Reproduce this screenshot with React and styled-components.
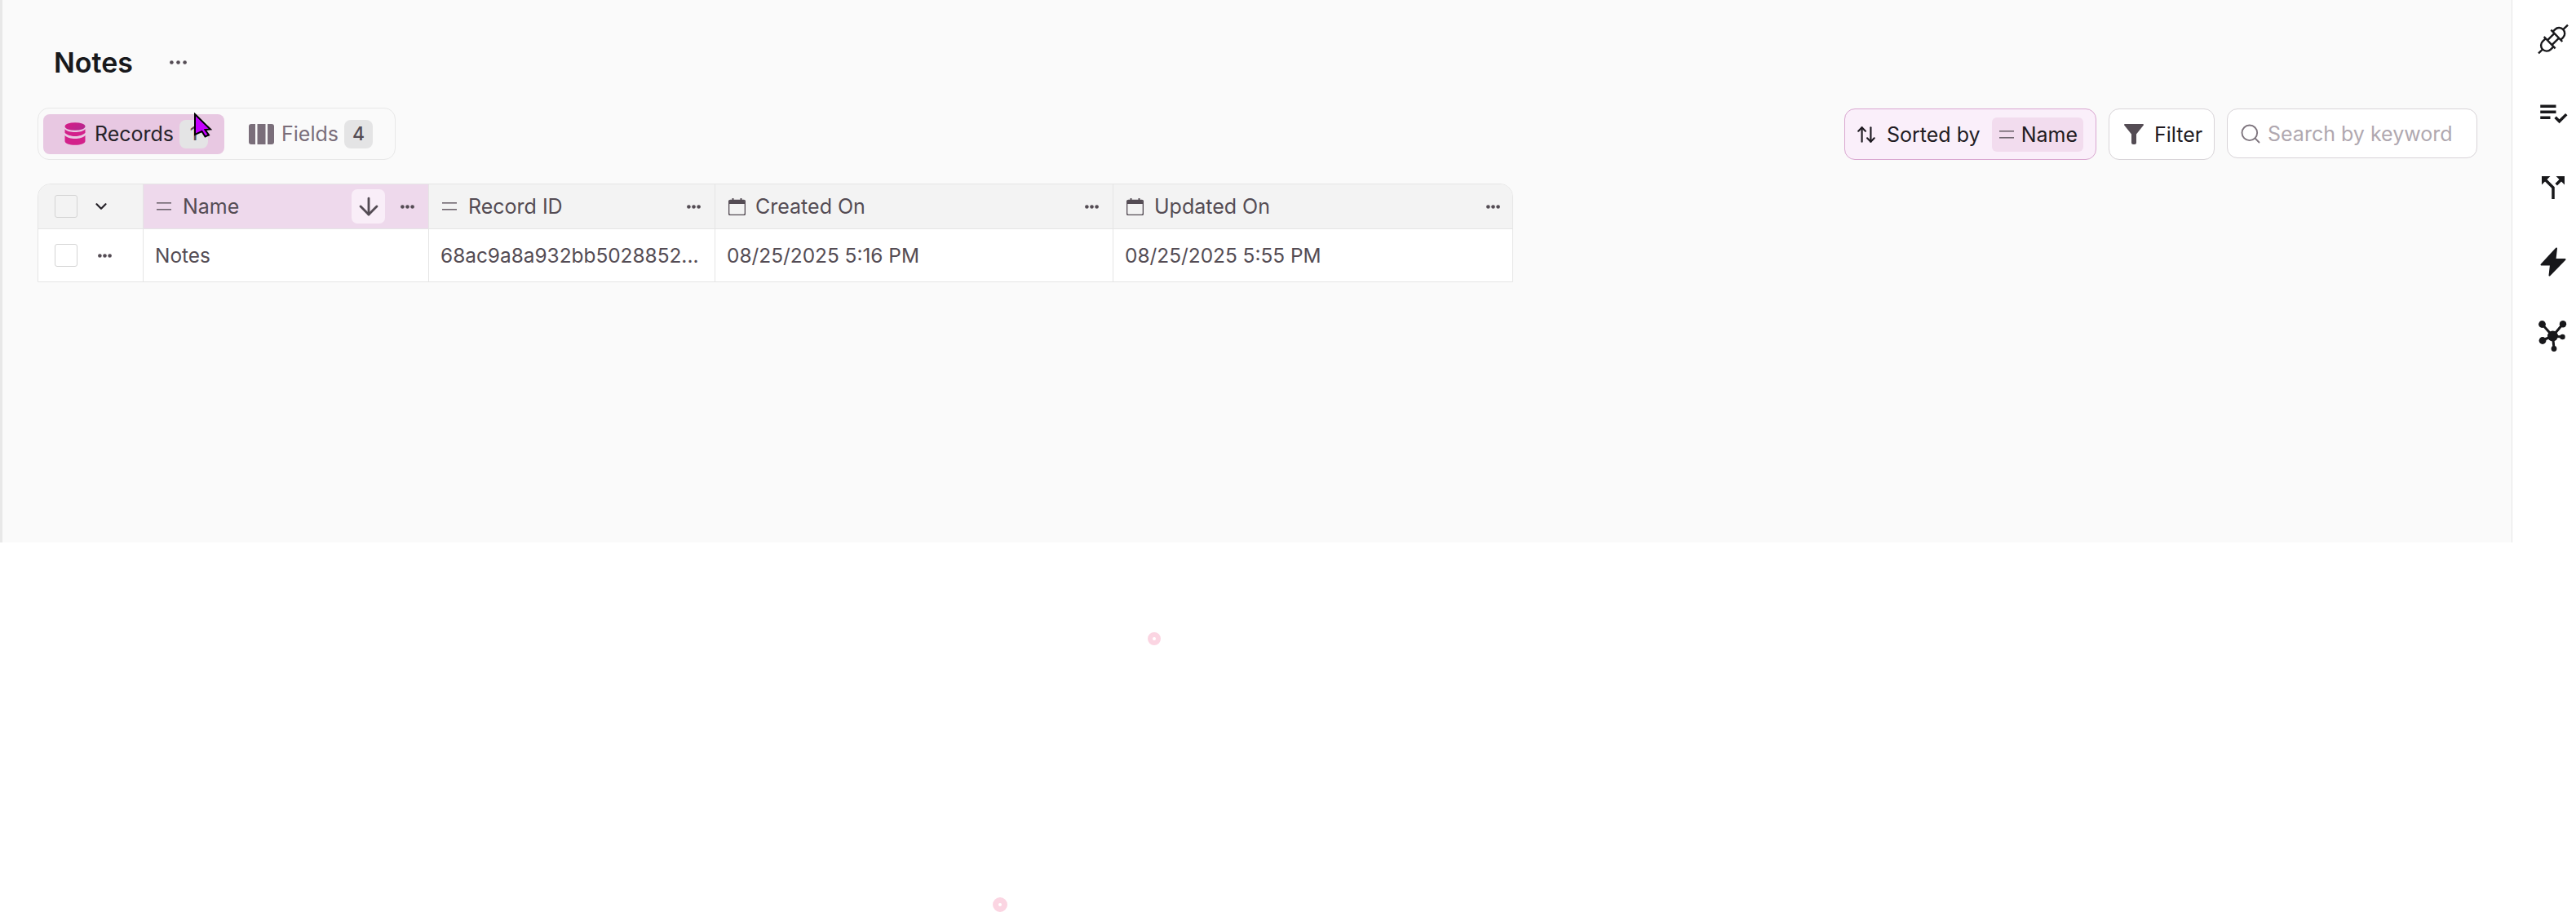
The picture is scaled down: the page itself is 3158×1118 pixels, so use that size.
import React from "react";
import styled, { createGlobalStyle } from "styled-components";
import { ArrowDown, ArrowUpDown, ChevronDown, Search } from "lucide-react";
import { MdCallSplit, MdPlaylistAddCheck } from "react-icons/md";

const GlobalStyle = createGlobalStyle`
  html, body {
    margin: 0;
    padding: 0;
    background: #fff;
  }
  body {
    font-family: Inter, "Liberation Sans", sans-serif;
    font-size: 25px;
    color: #544c54;
  }
`;

const Page = styled.div`
  position: relative;
  width: 3158px;
  height: 1118px;
  overflow: hidden;
  background: #fff;
`;
const Top = styled.div`
  display: flex;
  height: 665px;
`;
const Main = styled.main`
  flex: 1;
  min-width: 0;
  box-sizing: border-box;
  padding: 46px 42px 0 43px;
  background: #fafafa;
  border-left: 3px solid #e8e8e8;
`;
const TitleRow = styled.div`
  display: flex;
  align-items: center;
  height: 60px;
  padding-left: 20px;
`;
const Title = styled.h1`
  width: 142px;
  margin: 0;
  font-size: 34px;
  font-weight: 600;
  color: #18181b;
`;
const Toolbar = styled.div`
  display: flex;
  justify-content: space-between;
  margin-top: 26px;
`;
const Tabs = styled.div`
  display: flex;
  align-items: center;
  box-sizing: border-box;
  width: 439px;
  height: 64px;
  padding: 0 6px;
  border: 1.5px solid #e8e8e8;
  border-radius: 14px;
`;
const Tab = styled.div`
  display: flex;
  align-items: center;
  box-sizing: border-box;
  flex: none;
  width: ${(p) => p.$width}px;
  height: 49px;
  padding-left: ${(p) => p.$pad}px;
  margin-left: ${(p) => p.$offset || 0}px;
  border-radius: 8px;
  background: ${(p) => (p.$active ? "#e8c8e2" : "transparent")};
  color: ${(p) => (p.$active ? "#27232a" : "#7a6e7a")};
`;
const TabLabel = styled.span`
  margin-left: ${(p) => p.$gap}px;
`;
const Count = styled.span`
  display: flex;
  align-items: center;
  justify-content: center;
  width: 35px;
  height: 35px;
  margin-left: 7px;
  border-radius: 8px;
  background: #e4e4e5;
  color: #544c54;
  font-size: 23px;
  font-weight: 500;
`;
const Actions = styled.div`
  display: flex;
  align-items: flex-start;
  gap: 15px;
  padding-top: 1px;
`;
const SortButton = styled.div`
  display: flex;
  align-items: center;
  box-sizing: border-box;
  width: 309px;
  height: 63px;
  padding: 0 15px 0 13px;
  border: 1.5px solid #d9a6d0;
  border-radius: 13px;
  background: #faeffa;
  color: #1f1b22;
  white-space: nowrap;
`;
const SortChip = styled.span`
  display: flex;
  align-items: center;
  gap: 9px;
  height: 42px;
  margin-left: auto;
  padding: 0 7px 0 9px;
  border-radius: 6px;
  background: #f2dcee;
`;
const SortLabel = styled.span`
  margin-left: 12px;
`;
const FilterButton = styled.div`
  display: flex;
  align-items: center;
  gap: 13px;
  box-sizing: border-box;
  width: 130px;
  height: 63px;
  padding-left: 18px;
  border: 1.5px solid #d8d4d8;
  border-radius: 13px;
  background: #fff;
  color: #1f1b22;
`;
const SearchBox = styled.div`
  display: flex;
  align-items: center;
  gap: 7px;
  box-sizing: border-box;
  width: 307px;
  height: 61px;
  padding-left: 14px;
  border: 1.5px solid #d8d4d8;
  border-radius: 13px;
  background: #fff;
  color: #b0a8b0;
  white-space: nowrap;
`;
const Table = styled.div`
  display: grid;
  grid-template-columns: 129px 350px 351px 488px 491px;
  width: 1809px;
  margin-top: 29px;
  box-sizing: border-box;
  border: 1.5px solid #e5e5e5;
  border-radius: 16px 16px 0 0;
  overflow: hidden;
`;
const HeaderCell = styled.div`
  display: flex;
  align-items: center;
  box-sizing: border-box;
  height: 55px;
  padding: 0 17px 0 16px;
  background: ${(p) => (p.$sorted ? "#eed9ec" : "#f3f3f3")};
  border-bottom: 1.5px solid #e5e5e5;
  border-right: ${(p) => (p.$last ? "0" : "1.5px solid #e5e5e5")};
`;
const HeaderLabel = styled.span`
  margin-left: ${(p) => p.$gap || 14}px;
  white-space: nowrap;
`;
const SortToggle = styled.span`
  display: flex;
  align-items: center;
  justify-content: center;
  width: 41px;
  height: 42px;
  margin-left: auto;
  margin-right: 19px;
  border-radius: 7px;
  background: #f9eef8;
`;
const Cell = styled.div`
  display: flex;
  align-items: center;
  box-sizing: border-box;
  height: 64px;
  padding: 0 0 0 14px;
  background: #fff;
  font-size: 24.4px;
  white-space: nowrap;
  border-right: ${(p) => (p.$last ? "0" : "1.5px solid #e5e5e5")};
`;
const SelectCell = styled(Cell)`
  padding: 0 0 0 20px;
  background: ${(p) => (p.$head ? "#f3f3f3" : "#fff")};
  height: ${(p) => (p.$head ? "55px" : "64px")};
  border-bottom: ${(p) => (p.$head ? "1.5px solid #e5e5e5" : "0")};
`;
const Checkbox = styled.span`
  display: block;
  box-sizing: border-box;
  flex: none;
  width: 28px;
  height: 28px;
  margin-right: ${(p) => p.$gap}px;
  border: 1.5px solid #d4d4d4;
  border-radius: 3px;
  background: ${(p) => (p.$head ? "#f3f3f3" : "#fff")};
`;
const Dots = styled.svg`
  flex: none;
  width: ${(p) => p.$size || 17}px;
  height: 5px;
  margin-left: ${(p) => (p.$auto ? "auto" : "0")};
  color: #544c54;
`;
const Rail = styled.aside`
  flex: none;
  display: flex;
  flex-direction: column;
  align-items: center;
  box-sizing: border-box;
  width: 79px;
  padding: 2px 0 0 21px;
  background: #fff;
  border-left: 1.5px solid #e5e5e5;
  color: #18181b;
`;
const RailItem = styled.div`
  display: flex;
  align-items: center;
  justify-content: center;
  width: 44px;
  height: 91px;
`;
const Cursor = styled.svg`
  position: absolute;
  left: 237px;
  top: 138px;
  width: 24px;
  height: 32px;
`;
const Ripple = styled.span`
  position: absolute;
  left: ${(p) => p.$x}px;
  top: ${(p) => p.$y}px;
  box-sizing: border-box;
  width: ${(p) => p.$size}px;
  height: ${(p) => p.$size}px;
  border: ${(p) => (p.$size - 4) / 2}px solid #fbd5e2;
  border-radius: 50%;
  background: #fff;
`;

const MoreDots = ({ $size = 17, ...props }) => (
  <Dots viewBox={`0 0 ${$size} 5`} $size={$size} {...props}>
    <circle cx="2.4" cy="2.5" r="2.3" fill="currentColor" />
    <circle cx={$size / 2} cy="2.5" r="2.3" fill="currentColor" />
    <circle cx={$size - 2.4} cy="2.5" r="2.3" fill="currentColor" />
  </Dots>
);

const DatabaseIcon = () => (
  <svg width="26" height="28" viewBox="0 0 26 28">
    <defs>
      <linearGradient id="dbFill" x1="0" y1="0" x2="1" y2="0.6">
        <stop offset="0" stopColor="#d81b86" />
        <stop offset="1" stopColor="#b6288f" />
      </linearGradient>
    </defs>
    <ellipse cx="13" cy="5" rx="12.5" ry="4.8" fill="url(#dbFill)" />
    <path d="M.5 8.2C3 11 8 12 13 12s10-1 12.5-3.8v4.6C23 15.6 18 17 13 17S3 15.6.5 12.8z" fill="#d3218b" />
    <path d="M.5 16C3 18.8 8 20 13 20s10-1.2 12.5-4v7c0 2.8-5.6 4.8-12.5 4.8S.5 25.8.5 23z" fill="#d3218b" />
  </svg>
);

const FieldsIcon = () => (
  <svg width="31" height="25" viewBox="0 0 31 25" fill="#7a6e7a">
    <path d="M3 0h5v25H3a3 3 0 0 1-3-3V3a3 3 0 0 1 3-3z" />
    <rect x="10.5" y="0" width="10" height="25" />
    <path d="M23 0h5a3 3 0 0 1 3 3v19a3 3 0 0 1-3 3h-5z" />
  </svg>
);

const TextFieldIcon = () => (
  <svg width="18" height="10" viewBox="0 0 18 10" style={{ flex: "none" }}>
    <rect y="0" width="18" height="1.6" fill="#6f666f" />
    <rect y="8" width="18" height="1.6" fill="#6f666f" />
  </svg>
);

const CalendarIcon = () => (
  <svg width="21" height="21" viewBox="0 0 21 21" style={{ flex: "none" }}>
    <path d="M2.5 2.5h16a2 2 0 0 1 2 2v14a2 2 0 0 1-2 2h-16a2 2 0 0 1-2-2v-14a2 2 0 0 1 2-2z" fill="none" stroke="#544c54" strokeWidth="1.6" />
    <path d="M1 7h19V4.5a1.5 1.5 0 0 0-1.5-1.5h-16A1.5 1.5 0 0 0 1 4.5z" fill="#544c54" />
    <rect x="4.5" y="0" width="2" height="4" fill="#544c54" />
    <rect x="14.5" y="0" width="2" height="4" fill="#544c54" />
  </svg>
);

const FunnelIcon = () => (
  <svg width="24" height="25" viewBox="0 0 24 25" style={{ flex: "none" }}>
    <path d="M1 0h22a1 1 0 0 1 .8 1.6L15 12.5V23a2 2 0 0 1-2 2h-2a2 2 0 0 1-2-2V12.5L.2 1.6A1 1 0 0 1 1 0z" fill="#544c54" />
  </svg>
);

const PlugIcon = () => (
  <svg width="40" height="40" viewBox="0 0 40 40" fill="none" stroke="#18181b" strokeWidth="2.4">
    <g transform="translate(20 20) rotate(-44)">
      <path d="M-6 -10V10M6 -10V10M-6 -4H6M-6 4H6" />
      <path d="M-6 -7H-11A7 7 0 0 0 -11 7H-6" />
      <path d="M6 -7H10A7 7 0 0 1 10 7H6" />
      <path d="M-18 0H-25M17 0H25" />
    </g>
  </svg>
);

const BoltIcon = () => (
  <svg width="32" height="36" viewBox="0 0 32 36">
    <path d="M20 1.5 1.5 21.5H13L11.5 34.5 30.5 15H18.5z" fill="#18181b" stroke="#18181b" strokeWidth="2" strokeLinejoin="round" />
  </svg>
);

const NetworkIcon = () => (
  <svg width="36" height="38" viewBox="0 0 36 38" fill="#18181b">
    <path d="M4 4 17.5 19M30 4 17.5 19M5 24 17.5 19M29 20 17.5 19M19 34 17.5 19" stroke="#18181b" strokeWidth="3" />
    <circle cx="17.5" cy="19" r="6.5" />
    <circle cx="4.5" cy="4.5" r="4.4" />
    <circle cx="30" cy="4.2" r="4.2" />
    <circle cx="5" cy="24.5" r="4.4" />
    <circle cx="29.5" cy="20" r="3.2" />
    <circle cx="19" cy="34.5" r="3.4" />
  </svg>
);

const columns = [
  { name: "Record ID", value: "68ac9a8a932bb5028852...", icon: <TextFieldIcon /> },
  { name: "Created On", value: "08/25/2025 5:16 PM", icon: <CalendarIcon />, gap: 12 },
  { name: "Updated On", value: "08/25/2025 5:55 PM", icon: <CalendarIcon />, gap: 13, last: true },
];

export default function App() {
  return (
    <Page>
      <GlobalStyle />
      <Top>
        <Main>
          <TitleRow>
            <Title>Notes</Title>
            <MoreDots $size={21} />
          </TitleRow>
          <Toolbar>
            <Tabs>
              <Tab $active $width={222} $pad={26}>
                <DatabaseIcon />
                <TabLabel $gap={11}>Records</TabLabel>
                <Count>1</Count>
              </Tab>
              <Tab $width={170} $pad={0} $offset={30}>
                <FieldsIcon />
                <TabLabel $gap={9}>Fields</TabLabel>
                <Count>4</Count>
              </Tab>
            </Tabs>
            <Actions>
              <SortButton>
                <ArrowUpDown size={26} color="#1f1b22" strokeWidth={2} />
                <SortLabel>Sorted by</SortLabel>
                <SortChip>
                  <TextFieldIcon />
                  Name
                </SortChip>
              </SortButton>
              <FilterButton>
                <FunnelIcon />
                Filter
              </FilterButton>
              <SearchBox>
                <Search size={28} color="#7d747d" strokeWidth={1.6} />
                Search by keyword
              </SearchBox>
            </Actions>
          </Toolbar>
          <Table>
            <SelectCell $head>
              <Checkbox $head $gap={18} />
              <ChevronDown size={22} color="#27232a" strokeWidth={2.4} />
            </SelectCell>
            <HeaderCell $sorted>
              <TextFieldIcon />
              <HeaderLabel>Name</HeaderLabel>
              <SortToggle>
                <ArrowDown size={34} color="#544c54" strokeWidth={2} />
              </SortToggle>
              <MoreDots />
            </HeaderCell>
            {columns.map((col) => (
              <HeaderCell key={col.name} $last={col.last}>
                {col.icon}
                <HeaderLabel $gap={col.gap}>{col.name}</HeaderLabel>
                <MoreDots $auto />
              </HeaderCell>
            ))}
            <SelectCell>
              <Checkbox $gap={25} />
              <MoreDots />
            </SelectCell>
            <Cell>Notes</Cell>
            {columns.map((col) => (
              <Cell key={col.name} $last={col.last}>
                {col.value}
              </Cell>
            ))}
          </Table>
        </Main>
        <Rail>
          <RailItem>
            <PlugIcon />
          </RailItem>
          <RailItem>
            <MdPlaylistAddCheck size={42} />
          </RailItem>
          <RailItem>
            <MdCallSplit size={42} />
          </RailItem>
          <RailItem>
            <BoltIcon />
          </RailItem>
          <RailItem>
            <NetworkIcon />
          </RailItem>
        </Rail>
      </Top>
      <Cursor viewBox="0 0 24 32">
        <path d="M2 2 21 20.5 14.5 21 19 27.5 14.5 29.5 10.5 23 2 27z" fill="#c400ff" stroke="#000" strokeWidth="2" />
      </Cursor>
      <Ripple $x={1407} $y={775} $size={16} />
      <Ripple $x={1217} $y={1100} $size={18} />
    </Page>
  );
}
